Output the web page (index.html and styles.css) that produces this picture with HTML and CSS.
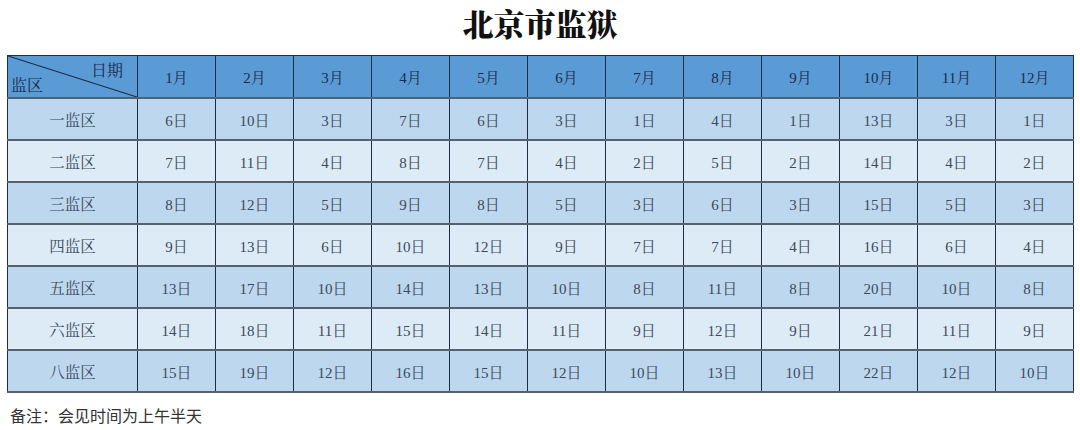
FILE: index.html
```html
<!DOCTYPE html>
<html lang="zh">
<head>
<meta charset="utf-8">
<link rel="stylesheet" href="styles.css">
</head>
<body>
<div class="page">
  <h1 class="title">北京市监狱</h1>
  <table class="sched">
    <colgroup>
      <col class="c-first">
      <col span="12" class="c-month">
    </colgroup>
    <thead>
      <tr>
        <th class="corner">
          <svg class="diag" viewBox="0 0 130 42" preserveAspectRatio="none"><line x1="0" y1="0" x2="130" y2="42" stroke="#1c2d44" stroke-width="1.2"/></svg>
          <span class="c-date">日期</span>
          <span class="c-area">监区</span>
        </th>
        <th>1月</th><th>2月</th><th>3月</th><th>4月</th><th>5月</th><th>6月</th><th>7月</th><th>8月</th><th>9月</th><th>10月</th><th>11月</th><th>12月</th>
      </tr>
    </thead>
    <tbody>
      <tr class="odd"><td>一监区</td><td>6日</td><td>10日</td><td>3日</td><td>7日</td><td>6日</td><td>3日</td><td>1日</td><td>4日</td><td>1日</td><td>13日</td><td>3日</td><td>1日</td></tr>
      <tr class="even"><td>二监区</td><td>7日</td><td>11日</td><td>4日</td><td>8日</td><td>7日</td><td>4日</td><td>2日</td><td>5日</td><td>2日</td><td>14日</td><td>4日</td><td>2日</td></tr>
      <tr class="odd"><td>三监区</td><td>8日</td><td>12日</td><td>5日</td><td>9日</td><td>8日</td><td>5日</td><td>3日</td><td>6日</td><td>3日</td><td>15日</td><td>5日</td><td>3日</td></tr>
      <tr class="even"><td>四监区</td><td>9日</td><td>13日</td><td>6日</td><td>10日</td><td>12日</td><td>9日</td><td>7日</td><td>7日</td><td>4日</td><td>16日</td><td>6日</td><td>4日</td></tr>
      <tr class="odd"><td>五监区</td><td>13日</td><td>17日</td><td>10日</td><td>14日</td><td>13日</td><td>10日</td><td>8日</td><td>11日</td><td>8日</td><td>20日</td><td>10日</td><td>8日</td></tr>
      <tr class="even"><td>六监区</td><td>14日</td><td>18日</td><td>11日</td><td>15日</td><td>14日</td><td>11日</td><td>9日</td><td>12日</td><td>9日</td><td>21日</td><td>11日</td><td>9日</td></tr>
      <tr class="odd"><td>八监区</td><td>15日</td><td>19日</td><td>12日</td><td>16日</td><td>15日</td><td>12日</td><td>10日</td><td>13日</td><td>10日</td><td>22日</td><td>12日</td><td>10日</td></tr>
    </tbody>
  </table>
  <p class="note">备注：会见时间为上午半天</p>
</div>
</body>
</html>
```
FILE: styles.css
```css
html, body {
  margin: 0;
  padding: 0;
  background: #ffffff;
}
.page {
  width: 1080px;
  height: 430px;
  overflow: hidden;
  font-family: "Noto Serif CJK SC", "Liberation Serif", "Noto Sans CJK SC", serif;
}
.title {
  margin: 0;
  height: 55px;
  line-height: 46px;
  text-align: center;
  font-size: 31px;
  font-weight: 900;
  color: #111111;
}
.sched {
  margin-left: 7px;
  width: 1066px;
  border-collapse: collapse;
  table-layout: fixed;
  font-family: "Liberation Serif", "Noto Serif CJK SC", "Noto Sans CJK SC", serif;
}
.c-first { width: 130px; }
.c-month { width: 78px; }
.sched th,
.sched td {
  height: 40px;
  padding: 0;
  text-align: center;
  vertical-align: middle;
  border-left: 1px solid #1c2d44;
  border-right: 1px solid #1c2d44;
  border-top: 2px solid #56616d;
  border-bottom: 2px solid #56616d;
  font-size: 15px;
}
.sched thead th {
  background: #5b9bd5;
  color: #1a2c4c;
  font-weight: normal;
  border-top: 1px solid #1c2d44;
  border-bottom: 1px solid #1c2d44;
  height: 41px;
}
.sched td {
  color: #3b4a5c;
}
.odd td { background: #bdd7ee; }
.even td { background: #ddebf7; }
.sched td:first-child {
  font-size: 15.5px;
  color: #3b4a5c;
}
.corner {
  position: relative;
  overflow: hidden;
}
.diag {
  position: absolute;
  left: 0;
  top: 0;
  width: 100%;
  height: 100%;
}
.c-date {
  position: absolute;
  right: 14px;
  top: 2px;
  font-size: 16px;
  color: #1a2c4c;
}
.c-area {
  position: absolute;
  left: 3px;
  bottom: 1px;
  font-size: 16px;
  color: #1a2c4c;
}
.note {
  margin: 12px 0 0 10px;
  font-size: 16px;
  line-height: 20px;
  color: #333333;
  font-family: "Noto Sans CJK SC", sans-serif;
}
```
